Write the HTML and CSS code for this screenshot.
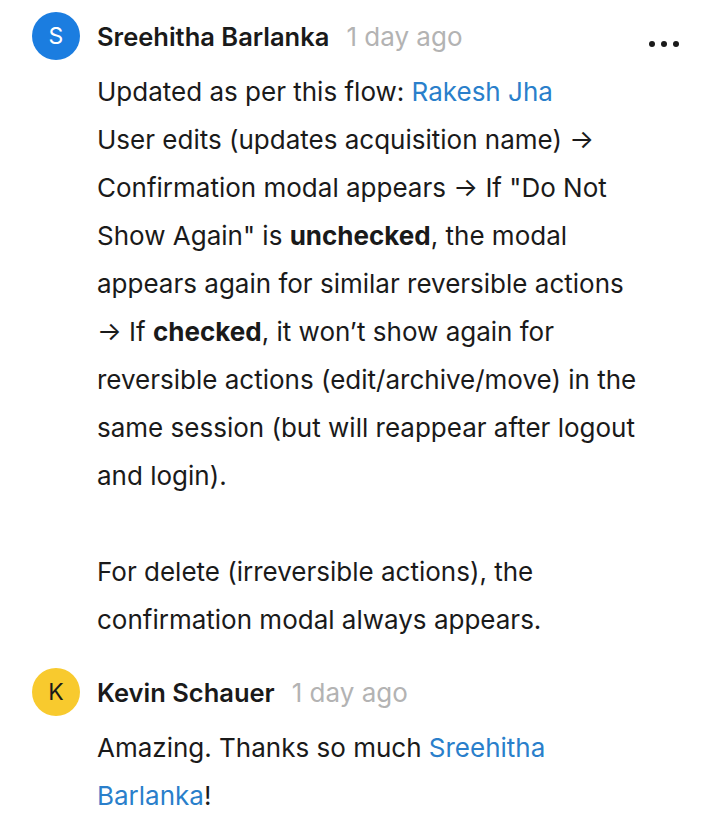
FILE: index.html
```html
<!DOCTYPE html>
<html>
<head>
<meta charset="utf-8">
<link rel="stylesheet" href="styles.css">
</head>
<body>
<div class="thread">
  <div class="comment">
    <div class="avatar avatar-blue">S</div>
    <div class="content">
      <div class="header">
        <span class="name">Sreehitha Barlanka</span>
        <span class="time">1 day ago</span>
      </div>
      <div class="body">
        <p>Updated as per this flow: <a class="mention">Rakesh Jha</a><br>User edits (updates acquisition name) → Confirmation modal appears → If "Do Not Show Again" is <b>unchecked</b>, the modal appears again for similar reversible actions → If <b>checked</b>, it won’t show again for reversible actions (edit/archive/move) in the same session (but will reappear after logout and login).</p>
        <p class="spaced">For delete (irreversible actions), the confirmation modal always appears.</p>
      </div>
    </div>
    <div class="more" aria-label="More">
      <span class="dot"></span><span class="dot"></span><span class="dot"></span>
    </div>
  </div>
  <div class="comment">
    <div class="avatar avatar-yellow">K</div>
    <div class="content">
      <div class="header">
        <span class="name">Kevin Schauer</span>
        <span class="time">1 day ago</span>
      </div>
      <div class="body">
        <p>Amazing. Thanks so much <a class="mention">Sreehitha Barlanka</a>!</p>
      </div>
    </div>
  </div>
</div>
</body>
</html>
```
FILE: styles.css
```css
* { box-sizing: border-box; }
html, body { margin: 0; padding: 0; background: #fff; }
body {
  font-family: Inter, "Noto Sans", "Liberation Sans", sans-serif;
  color: #1a1a1a;
  font-size: 26px;
}
.thread {
  display: flex;
  flex-direction: column;
  gap: 24px;
  padding: 12px 0 0 32px;
}
.comment {
  display: flex;
  align-items: flex-start;
}
.avatar {
  flex: 0 0 48px;
  width: 48px;
  height: 48px;
  margin-right: 17px;
  border-radius: 50%;
  display: flex;
  align-items: center;
  justify-content: center;
  font-size: 23px;
  line-height: 1;
}
.avatar-blue { background: #1b7de0; color: #fff; }
.avatar-yellow { background: #f8ca2e; color: #1a1a1a; }
.content {
  flex: 1 1 auto;
  min-width: 0;
  max-width: 552px;
}
.header {
  height: 48px;
  display: flex;
  align-items: center;
  gap: 17px;
  margin-bottom: 8px;
}
.name { font-weight: 600; color: #1a1a1a; font-size: 25.5px; }
.time { color: #b3b3b3; }
.body p {
  margin: 0;
  line-height: 48px;
}
.body p.spaced { margin-top: 48px; }
.mention { color: #2a7fcb; text-decoration: none; }
b { font-weight: 700; }
.more {
  flex: none;
  display: flex;
  gap: 6px;
  margin: 29px 0 0 auto;
  padding-right: 37px;
}
.dot {
  width: 6px;
  height: 6px;
  border-radius: 50%;
  background: #1a1a1a;
}
```
